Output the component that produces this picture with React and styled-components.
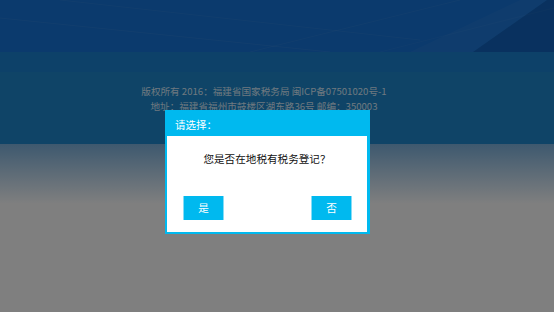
import React from "react";
import styled, { createGlobalStyle } from "styled-components";

const GlobalStyle = createGlobalStyle`
  html, body {
    margin: 0;
    padding: 0;
    width: 100%;
    height: 100%;
    overflow: hidden;
  }
  body {
    font-family: "Noto Sans CJK SC", "Noto Sans", sans-serif;
  }
`;

const Page = styled.div`
  position: relative;
  width: 100%;
  height: 312px;
  overflow: hidden;
  display: flex;
  flex-direction: column;
  background: #ffffff;
`;

const Header = styled.header`
  position: relative;
  height: 52px;
  flex: none;
  background: #1674da;
  overflow: hidden;
`;

const HeaderArt = styled.svg`
  display: block;
  width: 100%;
  height: 100%;
`;

const NavBand = styled.nav`
  height: 20px;
  flex: none;
  background: #1a83d2;
`;

const Footer = styled.footer`
  height: 72px;
  flex: none;
  box-sizing: border-box;
  padding: 12px 26px 0 0;
  background: #1e88ce;
  text-align: center;
  font-size: 9.6px;
  line-height: 15px;
  color: #dcf0ff;
`;

const FooterLine = styled.p`
  margin: 0;
  white-space: nowrap;
`;

const Fade = styled.div`
  flex: 1;
  background: linear-gradient(to bottom, #7cb2de 0px, #ffffff 60px, #ffffff 100%);
`;

const Overlay = styled.div`
  position: absolute;
  inset: 0;
  background: rgba(0, 0, 0, 0.5);
`;

const Dialog = styled.div`
  position: absolute;
  left: 165px;
  top: 110px;
  width: 205px;
  box-sizing: border-box;
  padding: 0 3px 2px 2px;
  background: #00b9ef;
`;

const DialogTitle = styled.div`
  height: 26px;
  box-sizing: border-box;
  padding: 3px 0 0 8px;
  line-height: 23px;
  font-size: 10.5px;
  color: #ffffff;
`;

const DialogBody = styled.div`
  height: 96px;
  background: #ffffff;
  display: flex;
  flex-direction: column;
`;

const Question = styled.div`
  margin-top: 15px;
  line-height: 16px;
  font-size: 10.6px;
  color: #111111;
  text-align: center;
`;

const Actions = styled.div`
  margin-top: 29px;
  padding: 0 15px 0 16px;
  display: flex;
  justify-content: space-between;
`;

const ActionButton = styled.button`
  width: 41px;
  height: 24px;
  padding: 0;
  margin: 0;
  border: none;
  border-left: 1px solid #86dcf6;
  border-right: 1px solid #86dcf6;
  background: #00b9ef;
  color: #ffffff;
  font-family: inherit;
  font-size: 10.6px;
  line-height: 24px;
  cursor: pointer;
`;

export default function App() {
  return (
    <>
      <GlobalStyle />
      <Page>
        <Header>
          <HeaderArt viewBox="0 0 554 52" preserveAspectRatio="none">
            <path d="M0 18 L330 52" stroke="rgba(255,255,255,0.06)" strokeWidth="1" fill="none" />
            <path d="M60 0 L420 40" stroke="rgba(255,255,255,0.05)" strokeWidth="1" fill="none" />
            <path d="M250 52 L460 0" stroke="rgba(255,255,255,0.05)" strokeWidth="1" fill="none" />
            <path d="M380 52 L554 8" stroke="rgba(255,255,255,0.04)" strokeWidth="1" fill="none" />
            <polygon points="410,52 520,0 547,0 473,52" fill="rgba(255,255,255,0.04)" />
            <polygon points="473,52 547,0 554,0 554,52" fill="rgba(0,0,20,0.14)" />
          </HeaderArt>
        </Header>
        <NavBand />
        <Footer>
          <FooterLine>版权所有 2016：福建省国家税务局 闽ICP备07501020号-1</FooterLine>
          <FooterLine>地址：福建省福州市鼓楼区湖东路36号 邮编：350003</FooterLine>
        </Footer>
        <Fade />
        <Overlay />
        <Dialog role="dialog" aria-label="请选择">
          <DialogTitle>请选择：</DialogTitle>
          <DialogBody>
            <Question>您是否在地税有税务登记？</Question>
            <Actions>
              <ActionButton>是</ActionButton>
              <ActionButton>否</ActionButton>
            </Actions>
          </DialogBody>
        </Dialog>
      </Page>
    </>
  );
}
